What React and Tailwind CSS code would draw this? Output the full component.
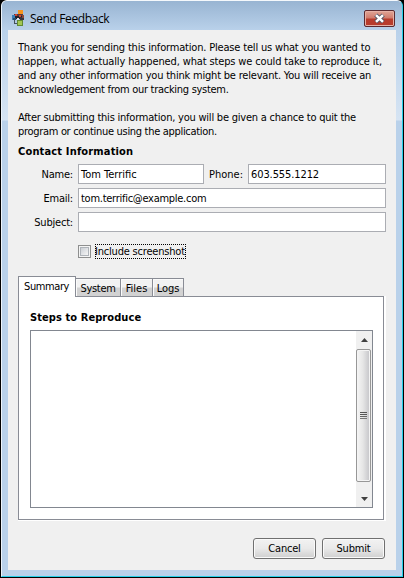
const ui = "font-['DejaVu_Sans_Condensed','DejaVu_Sans',sans-serif] [font-stretch:condensed]";

function AppIcon() {
  return (
    <svg width="16" height="18" viewBox="0 0 16 18" className="shrink-0" shapeRendering="crispEdges">
      <rect x="7" y="0" width="5" height="5" fill="#f7941d" />
      <rect x="6" y="10" width="6" height="6" fill="#5f8a34" />
      <rect x="7" y="11" width="4" height="4" fill="#a3c653" />
      <path d="M3 10v4h3v-1H4v-3z" fill="#44505c" />
      <rect x="3" y="4" width="9" height="3" fill="#5a3a3c" />
      <rect x="1" y="5" width="4" height="5" fill="#3a7fb8" />
      <rect x="4" y="6" width="8" height="3" fill="#26222a" />
      <rect x="2" y="8" width="3" height="2" fill="#27506f" />
      <rect x="9" y="7" width="4" height="3" fill="#3a363e" />
      <rect x="4" y="4" width="2" height="2" fill="#d2452f" />
      <rect x="8" y="5" width="2" height="2" fill="#d2452f" />
      <rect x="6" y="8" width="2" height="2" fill="#dfe6ee" />
      <rect x="11" y="5" width="2" height="3" fill="#8b4a3c" />
    </svg>
  );
}

function Field({ value, className }) {
  return (
    <div className={`h-5 border border-[#abadb3] bg-white pl-[2px] leading-[19px] whitespace-nowrap ${className}`}>
      {value}
    </div>
  );
}

function Label({ children }) {
  return <div className="mr-[5px] w-[60px] text-right leading-[21px] h-5 tracking-[-0.2px] whitespace-nowrap">{children}</div>;
}

function Tab({ children, className }) {
  return (
    <div className={`h-[18px] border-t border-r border-[#898c95] bg-gradient-to-b from-[#f2f2f2] from-45% to-[#d2d2d2] to-55% text-center leading-[19px] shadow-[inset_1px_1px_0_#fbfbfb] ${className}`}>
      {children}
    </div>
  );
}

function Button({ children }) {
  return (
    <button className="h-[21px] w-[63px] rounded-[3px] border border-[#707070] bg-gradient-to-b from-[#f2f2f2] via-[#e9e9e9] via-50% to-[#cfcfcf] text-center leading-[18px] tracking-[-0.2px] shadow-[inset_0_0_0_1px_#fafafa]">
      {children}
    </button>
  );
}

export default function App() {
  return (
    <div className={`h-[578px] w-[404px] overflow-hidden bg-black text-[11px] text-black ${ui}`}>
      <div className="ml-px flex h-[577px] w-[402px] flex-col rounded-t-[6px] border border-t-[#f4f8fc] border-r-[#26cfe8] border-b-[#26cfe8] border-l-[#edf4fb] bg-[#b9d1ea]">
        <div className="flex h-[29px] shrink-0 items-start rounded-t-[5px] bg-gradient-to-b from-[#98b4d2] to-[#b9d1ea] pl-[9px] pr-[7px] pt-[9px]">
          <AppIcon />
          <div className="ml-[3px] -mt-px font-['Open_Sans',sans-serif] text-[12px] leading-[20px] tracking-[-0.38px] [font-stretch:normal]">Send Feedback</div>
          <div className="ml-auto flex h-[17px] w-[31px] items-center justify-center rounded-[2px] border border-[#5b2a30] bg-gradient-to-b from-[#e0a596] via-[#cf7a6c] via-48% to-[#b83c2c] to-52% shadow-[inset_0_0_0_1px_#e6b0a5]">
            <svg width="13" height="11" viewBox="0 0 13 11">
              <path d="M2.8 2L10.2 9M10.2 2L2.8 9" stroke="#535666" strokeWidth="4.4" />
              <path d="M3 2.2L10 8.8M10 2.2L3 8.8" stroke="#fff" strokeWidth="2.5" />
            </svg>
          </div>
        </div>
        <div className="flex h-[540px] w-[400px] bg-[linear-gradient(to_bottom,#b9d1ea_0px,#d6e4f3_90px,#b9d1ea_91px)] px-[6px]">
          <div className="flex w-[388px] flex-col bg-[#f0f0f0] pl-[10px] pt-[10px]">
            <div className="h-[98px] whitespace-nowrap leading-[16px]">
              <div className="h-[14px] tracking-[-0.18px]">Thank you for sending this information. Please tell us what you wanted to</div>
              <div className="h-[14px] tracking-[-0.14px]">happen, what actually happened, what steps we could take to reproduce it,</div>
              <div className="h-[14px] tracking-[-0.2px]">and any other information you think might be relevant. You will receive an</div>
              <div className="h-[14px] tracking-[-0.29px]">acknowledgement from our tracking system.</div>
              <div className="mt-[14px] h-[14px] tracking-[-0.22px]">After submitting this information, you will be given a chance to quit the</div>
              <div className="h-[14px] tracking-[-0.31px]">program or continue using the application.</div>
            </div>
            <div className="h-[26px] pt-[6px] font-bold leading-[15px] tracking-[0.16px]">Contact Information</div>
            <div className="-ml-[5px] flex flex-col gap-1">
              <div className="flex">
                <Label>Name:</Label>
                <Field value="Tom Terrific" className="w-[126px]" />
                <div className="w-[44px] pl-[5px] leading-[21px] h-5">Phone:</div>
                <Field value="603.555.1212" className="w-[138px] tracking-[-0.1px]" />
              </div>
              <div className="flex">
                <Label>Email:</Label>
                <Field value="tom.terrific@example.com" className="w-[308px] tracking-[-0.27px]" />
              </div>
              <div className="flex">
                <Label>Subject:</Label>
                <Field className="w-[308px]" />
              </div>
            </div>
            <div className="mt-3 ml-[60px] flex h-[15px]">
              <div className="mt-px h-[13px] w-[13px] border border-[#8e8f8f] bg-[#f4f4f4] p-px">
                <div className="h-[9px] w-[9px] border border-[#aeb3b9] bg-gradient-to-br from-[#cbcfd5] to-[#f6f6f6]" />
              </div>
              <div className="ml-1 h-[15px] w-[91px] whitespace-nowrap border border-dotted border-black -indent-px leading-[13px] tracking-[-0.2px]">Include screenshot</div>
            </div>
            <div className="mt-[17px] flex h-5 items-end">
              <div className="z-10 -mb-px h-[21px] w-[58px] border border-b-0 border-[#898c95] bg-white pl-[5px] leading-[19px] tracking-[-0.4px]">Summary</div>
              <Tab className="w-[45px] tracking-[-0.3px]">System</Tab>
              <Tab className="w-8">Files</Tab>
              <Tab className="w-[31px] tracking-[-0.1px]">Logs</Tab>
            </div>
            <div className="h-[225px] w-[368px] bg-white">
              <div className="h-[224px] w-[366px] border border-[#898c95] pl-[11px] pt-[13px]">
                <div className="h-5 font-bold leading-[15px] tracking-[0.08px]">Steps to Reproduce</div>
                <div className="flex h-[178px] w-[343px] justify-end border border-[#828790] bg-white">
                  <div className="flex w-[16px] flex-col bg-[#f0f0f0]">
                    <div className="flex h-[18px] items-center justify-center">
                      <svg width="7" height="4"><path d="M3.5 0L7 4H0z" fill="#404040" /></svg>
                    </div>
                    <div className="flex h-[133px] w-[15px] flex-col items-center justify-center gap-px rounded-[2px] border border-[#979797] bg-gradient-to-r from-[#f5f5f5] via-[#e6e6e6] via-45% to-[#c4c4c8] shadow-[inset_0_0_0_1px_#f4f4f4]">
                      <div className="h-px w-[7px] bg-[#555]" />
                      <div className="h-px w-[7px] bg-[#555]" />
                      <div className="h-px w-[7px] bg-[#666]" />
                      <div className="h-px w-[7px] bg-[#777]" />
                    </div>
                    <div className="flex flex-1 items-center justify-center pt-[8px]">
                      <svg width="7" height="4"><path d="M0 0H7L3.5 4z" fill="#404040" /></svg>
                    </div>
                  </div>
                </div>
              </div>
            </div>
            <div className="mt-[17px] ml-[235px] flex gap-[6px]">
              <Button>Cancel</Button>
              <Button>Submit</Button>
            </div>
          </div>
        </div>
      </div>
    </div>
  );
}
